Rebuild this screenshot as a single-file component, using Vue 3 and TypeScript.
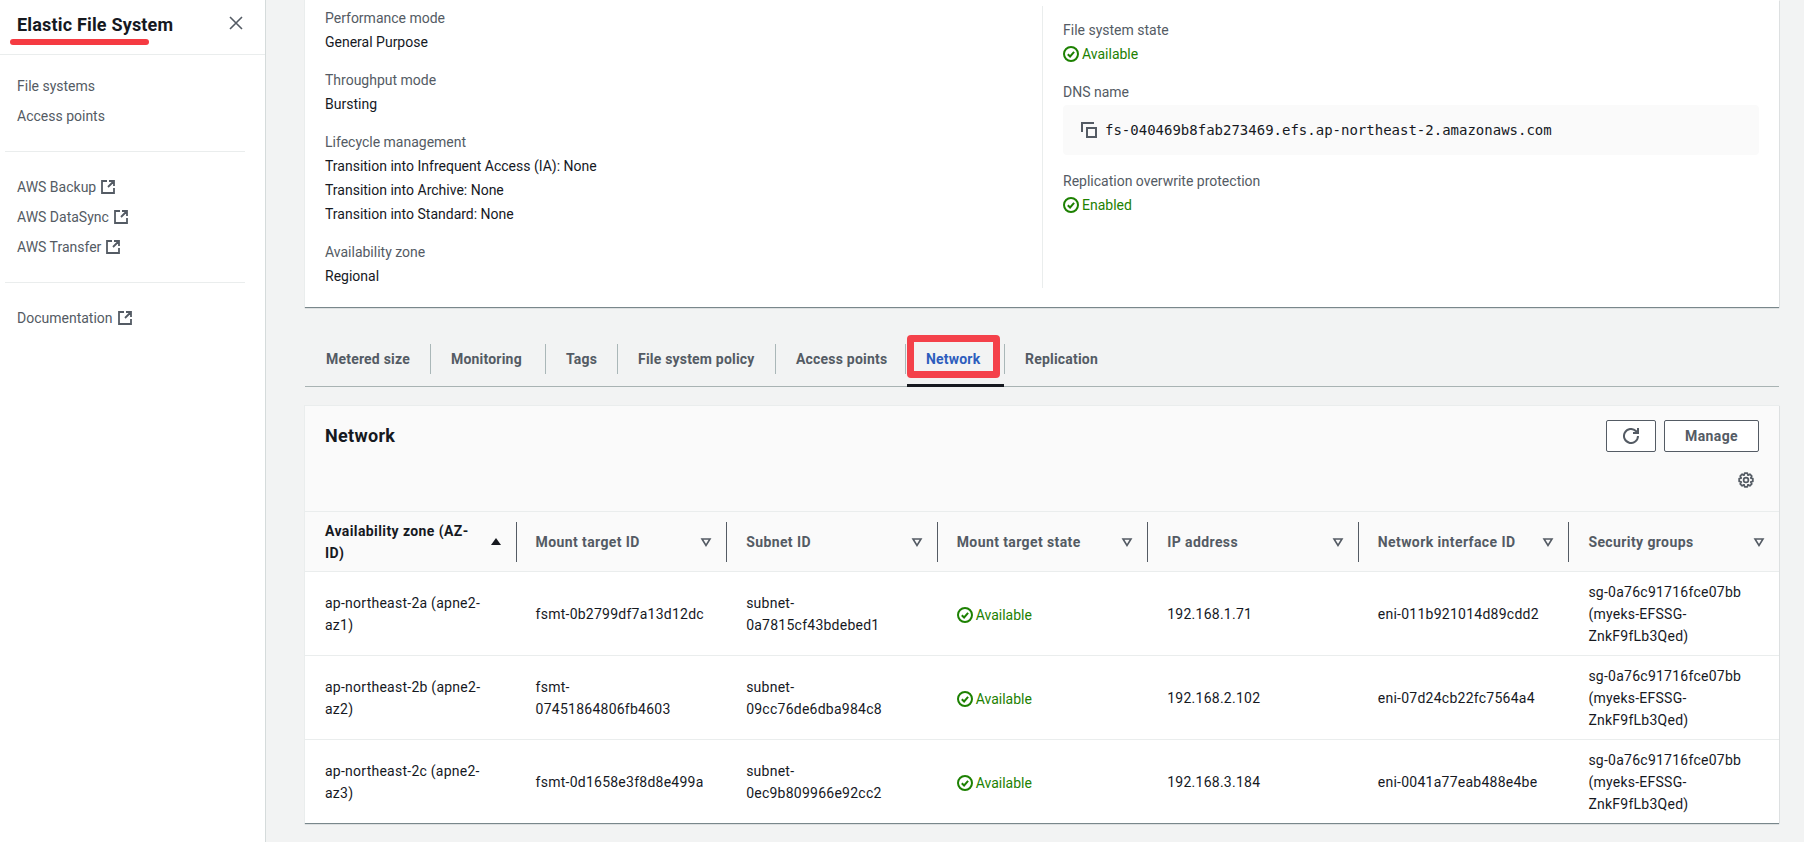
<script setup lang="ts">
interface Row {
  zone: string
  target: string
  subnet: string
  ip: string
  eni: string
}

const navGroups = [
  [{ label: 'File systems', ext: false }, { label: 'Access points', ext: false }],
  [{ label: 'AWS Backup', ext: true }, { label: 'AWS DataSync', ext: true }, { label: 'AWS Transfer', ext: true }],
  [{ label: 'Documentation', ext: true }],
]

const tabs = ['Metered size', 'Monitoring', 'Tags', 'File system policy', 'Access points', 'Network', 'Replication']

const columns = ['Availability zone (AZ-ID)', 'Mount target ID', 'Subnet ID', 'Mount target state', 'IP address', 'Network interface ID', 'Security groups']

const rows: Row[] = [
  { zone: 'ap-northeast-2a (apne2-az1)', target: 'fsmt-0b2799df7a13d12dc', subnet: 'subnet-0a7815cf43bdebed1', ip: '192.168.1.71', eni: 'eni-011b921014d89cdd2' },
  { zone: 'ap-northeast-2b (apne2-az2)', target: 'fsmt-\n07451864806fb4603', subnet: 'subnet-09cc76de6dba984c8', ip: '192.168.2.102', eni: 'eni-07d24cb22fc7564a4' },
  { zone: 'ap-northeast-2c (apne2-az3)', target: 'fsmt-0d1658e3f8d8e499a', subnet: 'subnet-0ec9b809966e92cc2', ip: '192.168.3.184', eni: 'eni-0041a77eab488e4be' },
]

// 8 tooth gear outline, centred on 8,8
function gearOutline(): string {
  const pts: string[] = []
  for (let i = 0; i < 8; i++) {
    const a = (i * Math.PI) / 4
    for (const [r, d] of [[5.2, -0.36], [7, -0.2], [7, 0.2], [5.2, 0.36]] as const) {
      pts.push(`${(8 + r * Math.cos(a + d)).toFixed(2)} ${(8 + r * Math.sin(a + d)).toFixed(2)}`)
    }
  }
  return `M${pts.join('L')}Z`
}
const gearPath = gearOutline()
</script>

<template>
  <div class="page">
    <aside class="sidebar">
      <div class="side-head">
        <span class="side-title">Elastic File System</span>
        <svg class="close" viewBox="0 0 16 16"><path d="M2 2l12 12M14 2L2 14" /></svg>
        <span class="mark-line"></span>
      </div>
      <nav v-for="(group, i) in navGroups" :key="i" class="nav-group">
        <a v-for="item in group" :key="item.label" class="nav-item">
          {{ item.label }}
          <svg v-if="item.ext" class="ext" viewBox="0 0 14 14"><path d="M6 1H1v12h12V8M8 1h5v5M13 1L7 7" /></svg>
        </a>
      </nav>
    </aside>

    <main class="main">
      <section class="summary">
        <div class="sum-col">
          <div class="kv"><div class="k">Performance mode</div><div>General Purpose</div></div>
          <div class="kv"><div class="k">Throughput mode</div><div>Bursting</div></div>
          <div class="kv">
            <div class="k">Lifecycle management</div>
            <div>Transition into Infrequent Access (IA): None</div>
            <div>Transition into Archive: None</div>
            <div>Transition into Standard: None</div>
          </div>
          <div class="kv"><div class="k">Availability zone</div><div>Regional</div></div>
        </div>
        <div class="sum-col right">
          <div class="kv">
            <div class="k">File system state</div>
            <div class="ok">
              <svg class="check" viewBox="0 0 16 16"><circle cx="8" cy="8" r="7" /><path d="M4.8 8.2l2.3 2.3 4-4.6" /></svg>Available
            </div>
          </div>
          <div class="kv">
            <div class="k">DNS name</div>
            <div class="dns">
              <svg class="copy" viewBox="0 0 16 16"><path d="M1 10V1h12" /><rect x="6" y="6" width="9" height="9" /></svg>
              <code>fs-040469b8fab273469.efs.ap-northeast-2.amazonaws.com</code>
            </div>
          </div>
          <div class="kv">
            <div class="k">Replication overwrite protection</div>
            <div class="ok">
              <svg class="check" viewBox="0 0 16 16"><circle cx="8" cy="8" r="7" /><path d="M4.8 8.2l2.3 2.3 4-4.6" /></svg>Enabled
            </div>
          </div>
        </div>
      </section>

      <div class="tabs">
        <div v-for="tab in tabs" :key="tab" class="tab" :class="{ active: tab === 'Network' }">
          <span>{{ tab }}</span>
          <span v-if="tab === 'Network'" class="mark-box"></span>
        </div>
      </div>

      <section class="card">
        <header class="card-head">
          <h2>Network</h2>
          <div class="actions">
            <div class="buttons">
              <button type="button" class="btn icon-btn">
                <svg viewBox="0 0 16 16"><path d="M10 5h5V0" /><path d="M15 8a7 7 0 1 1-2.1-5L15 5" /></svg>
              </button>
              <button type="button" class="btn">Manage</button>
            </div>
            <svg class="gear" viewBox="0 0 16 16"><path :d="gearPath" /><circle cx="8" cy="8" r="2.4" /></svg>
          </div>
        </header>
        <table class="grid">
          <thead>
            <tr>
              <th v-for="(col, i) in columns" :key="col" :class="{ sorted: i === 0 }">
                <div class="th-in">
                  <span class="th-label">{{ col }}</span>
                  <svg class="sort" viewBox="0 0 12 12">
                    <path v-if="i === 0" class="up" d="M6 2l5 7H1z" />
                    <path v-else d="M2 3h8L6 9.5z" />
                  </svg>
                </div>
              </th>
            </tr>
          </thead>
          <tbody>
            <tr v-for="row in rows" :key="row.zone">
              <td>{{ row.zone }}</td>
              <td>{{ row.target }}</td>
              <td>{{ row.subnet }}</td>
              <td>
                <span class="ok state">
                  <svg class="check" viewBox="0 0 16 16"><circle cx="8" cy="8" r="7" /><path d="M4.8 8.2l2.3 2.3 4-4.6" /></svg>Available
                </span>
              </td>
              <td>{{ row.ip }}</td>
              <td>{{ row.eni }}</td>
              <td>sg-0a76c91716fce07bb (myeks-EFSSG-ZnkF9fLb3Qed)</td>
            </tr>
          </tbody>
        </table>
      </section>
    </main>
  </div>
</template>

<style>
html, body { margin: 0; background: #f2f3f3; }
</style>

<style scoped>
.page {
  display: flex;
  height: 842px;
  overflow: hidden;
  font-family: Roboto, "Liberation Sans", sans-serif;
  font-size: 14px;
  line-height: 22px;
  color: #16191f;
}

.sidebar {
  flex: 0 0 266px;
  box-sizing: border-box;
  background: #fff;
  border-right: 1px solid #d5dbdb;
}

.side-head {
  position: relative;
  display: flex;
  justify-content: space-between;
  align-items: center;
  height: 54px;
  padding: 0 21px 0 17px;
  border-bottom: 1px solid #eaeded;
}

.side-title { font-size: 18px; font-weight: 700; letter-spacing: 0.18px; margin-top: -4px; }

.close { width: 16px; height: 16px; fill: none; stroke: #545b64; stroke-width: 1.6; margin-top: -8px; }

.mark-line {
  position: absolute;
  left: 10px;
  top: 39px;
  width: 139px;
  height: 6px;
  border-radius: 3px;
  background: #f53b42;
}

.nav-group {
  display: flex;
  flex-direction: column;
  gap: 8px;
  margin: 0 20px 0 5px;
  padding: 24px 0 24px 12px;
  border-bottom: 1px solid #eaeded;
}

.nav-group:first-of-type { padding-top: 20px; }
.nav-group:last-of-type { border-bottom: none; }

.nav-item { color: #545b64; display: flex; align-items: center; gap: 5px; }

.ext { width: 14px; height: 14px; fill: none; stroke: #545b64; stroke-width: 1.8; }

.main { flex: 1; padding: 0 25px 0 39px; min-width: 0; }

.summary {
  display: grid;
  grid-template-columns: 1fr 1fr;
  height: 307px;
  box-sizing: border-box;
  padding: 6px 0 19px;
  background: #fff;
  box-shadow: -1px 0 0 #eaeded, 0 1px 1px rgba(0, 28, 36, 0.5);
}

.sum-col { padding: 0 20px; font-size: 14px; line-height: 24px; }
.sum-col.right { border-left: 1px solid #eaeded; padding-top: 12px; }

.kv { margin-bottom: 14px; }
.kv:last-child { margin-bottom: 0; }
.k { color: #545b64; }

.ok { color: #1d8102; display: flex; align-items: center; gap: 3px; }
.check { width: 16px; height: 16px; fill: none; stroke: #1d8102; stroke-width: 2; }

.state { margin-top: 3px; }

.dns {
  display: flex;
  align-items: center;
  height: 50px;
  margin-top: 1px;
  margin-bottom: 14px;
  padding-left: 18px;
  gap: 8px;
  background: #fafafa;
  border-radius: 4px;
}

.dns code { font-family: "DejaVu Sans Mono", monospace; font-size: 14px; }

.copy { width: 16px; height: 16px; fill: none; stroke: #545b64; stroke-width: 2; }

.tabs {
  display: grid;
  grid-template-columns: 125px 115px 72px 158px 130px 99px auto;
  height: 62px;
  margin-top: 18px;
  padding-top: 19px;
  box-sizing: border-box;
  border-bottom: 1px solid #a9b3b3;
}

.tab {
  position: relative;
  height: 30px;
  display: flex;
  align-items: center;
  padding-left: 20px;
  font-weight: 700;
  letter-spacing: 0.2px;
  color: #545b64;
  border-left: 1px solid #aab7b8;
}

.tab:first-child { border-left: none; padding-left: 21px; }

.tab.active { color: #2d5dbd; }

.tab.active::after {
  content: "";
  position: absolute;
  left: 1px;
  right: 0;
  bottom: -13px;
  height: 3px;
  background: #16191f;
}

.mark-box {
  position: absolute;
  left: 1px;
  right: 4px;
  top: -9px;
  height: 43px;
  box-sizing: border-box;
  border: 7px solid #f4414a;
  border-radius: 4px;
}

.card {
  margin-top: 18px;
  background: #fff;
  border-top: 1px solid #eaeded;
  box-shadow: -1px 0 0 #eaeded, 0 1px 1px rgba(0, 28, 36, 0.5);
}

.card-head {
  display: flex;
  justify-content: space-between;
  height: 106px;
  box-sizing: border-box;
  padding: 14px 20px 0 20px;
  background: #fafafa;
  border-bottom: 1px solid #eaeded;
}

.card-head h2 { margin: 2px 0 0; font-size: 18px; font-weight: 700; line-height: 28px; letter-spacing: 0.3px; }

.actions { display: flex; flex-direction: column; align-items: flex-end; }

.buttons { display: flex; gap: 8px; }

.btn {
  height: 32px;
  width: 95px;
  border: 1px solid #545b64;
  border-radius: 2px;
  background: #fff;
  color: #545b64;
  font: 700 14px Roboto, sans-serif;
  letter-spacing: 0.4px;
}

.icon-btn { width: 50px; display: flex; align-items: center; justify-content: center; }
.icon-btn svg { width: 16px; height: 16px; fill: none; stroke: #545b64; stroke-width: 2; }

.gear { width: 16px; height: 16px; fill: none; stroke: #545b64; stroke-width: 1.7; stroke-linejoin: round; margin-top: 20px; margin-right: 5px; }

.grid { width: 100%; table-layout: fixed; border-collapse: collapse; }

.grid th {
  height: 59px;
  padding: 0;
  background: #fafafa;
  border-bottom: 1px solid #eaeded;
  text-align: left;
  color: #545b64;
  font-weight: 700;
  letter-spacing: 0.4px;
}

.grid th.sorted { color: #16191f; }

.th-in {
  display: flex;
  align-items: center;
  justify-content: space-between;
  height: 40px;
  padding: 0 14px 0 19px;
  border-left: 1px solid #545b64;
}

th:first-child .th-in { border-left: none; padding-left: 20px; }

.sort { flex: none; width: 12px; height: 12px; margin-left: 10px; fill: #fafafa; stroke: #545b64; stroke-width: 1.6; }
.sort .up { fill: #16191f; stroke: none; }

.grid td {
  height: 83px;
  padding: 0 20px;
  line-height: 22px;
  letter-spacing: 0.25px;
  white-space: pre-line;
  border-bottom: 1px solid #eaeded;
  vertical-align: middle;
}

.grid td .state { letter-spacing: 0; }

.grid tr:last-child td { border-bottom: none; }
</style>
